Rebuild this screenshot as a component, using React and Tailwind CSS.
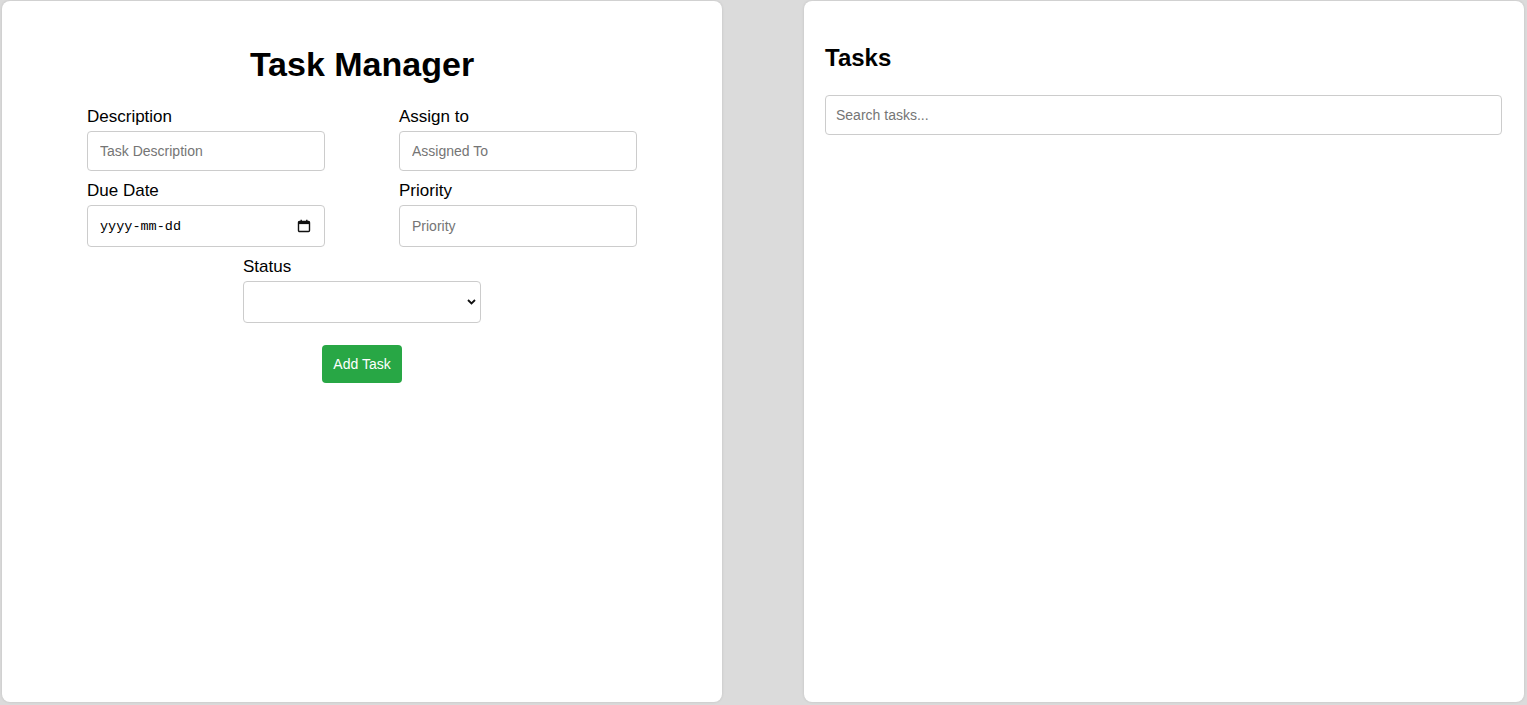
import React, { useState } from 'react';

const inputCls =
    'w-full border border-[#ccc] rounded-[4px] px-3 text-[14px] text-black bg-white outline-none placeholder:text-[#757575]';

const Field = ({ label, children }) => (
    <div className="flex flex-col mb-[10px]">
        <label className="text-[17px] leading-[20px] mb-[4px] text-black">{label}</label>
        {children}
    </div>
);

const CalendarIcon = () => (
    <svg width="14" height="14" viewBox="0 0 14 14" fill="none">
        <rect x="1.5" y="2.5" width="11" height="10" rx="1" stroke="#111" strokeWidth="1.4" />
        <rect x="1.5" y="2.5" width="11" height="2.6" fill="#111" />
        <line x1="4.2" y1="0.8" x2="4.2" y2="3" stroke="#111" strokeWidth="1.4" />
        <line x1="9.8" y1="0.8" x2="9.8" y2="3" stroke="#111" strokeWidth="1.4" />
    </svg>
);

const App = () => {
    const [description, setDescription] = useState('');
    const [assignedTo, setAssignedTo] = useState('');
    const [dueDate, setDueDate] = useState('');
    const [priority, setPriority] = useState('');
    const [status, setStatus] = useState('');
    const [search, setSearch] = useState('');

    return (
        <div
            className="h-[705px] bg-[#dbdbdb] flex pl-[2px] pr-[3px] pt-[1px] pb-[3px] gap-[82px]"
            style={{ fontFamily: '"Liberation Sans", Arial, sans-serif' }}
        >
            {/* left: form */}
            <div className="w-[720px] bg-white rounded-lg shadow-[0_0_3px_rgba(0,0,0,0.12)] pt-[44px]">
                <h1 className="text-[34px] leading-[39px] font-bold text-black text-center">Task Manager</h1>

                <div className="w-[550px] mx-auto mt-[23px]">
                    <div className="grid grid-cols-[238px_238px] gap-x-[74px]">
                        <Field label="Description">
                            <input
                                className={`${inputCls} h-10`}
                                placeholder="Task Description"
                                value={description}
                                onChange={(e) => setDescription(e.target.value)}
                            />
                        </Field>
                        <Field label="Assign to">
                            <input
                                className={`${inputCls} h-10`}
                                placeholder="Assigned To"
                                value={assignedTo}
                                onChange={(e) => setAssignedTo(e.target.value)}
                            />
                        </Field>
                        <Field label="Due Date">
                            <div className="relative">
                                <input
                                    className={`${inputCls} h-[42px] placeholder:text-black`}
                                    style={{ fontFamily: '"Liberation Mono", "DejaVu Sans Mono", monospace', fontSize: '13.5px' }}
                                    placeholder="yyyy-mm-dd"
                                    value={dueDate}
                                    onChange={(e) => setDueDate(e.target.value)}
                                />
                                <span className="absolute right-[14px] top-[14px] flex">
                                    <CalendarIcon />
                                </span>
                            </div>
                        </Field>
                        <Field label="Priority">
                            <input
                                className={`${inputCls} h-[42px]`}
                                placeholder="Priority"
                                value={priority}
                                onChange={(e) => setPriority(e.target.value)}
                            />
                        </Field>
                    </div>

                    <div className="w-[238px] mx-auto">
                        <Field label="Status">
                            <div className="relative">
                                <select
                                    className={`${inputCls} h-[42px] appearance-none`}
                                    value={status}
                                    onChange={(e) => setStatus(e.target.value)}
                                >
                                    <option value=""></option>
                                    <option value="todo">To Do</option>
                                    <option value="progress">In Progress</option>
                                    <option value="done">Done</option>
                                </select>
                                <svg className="absolute right-[5px] top-[18px] pointer-events-none" width="9" height="6" viewBox="0 0 9 6" fill="none">
                                    <path d="M1 1l3.5 3.5L8 1" stroke="#111" strokeWidth="1.8" />
                                </svg>
                            </div>
                        </Field>
                    </div>

                    <div className="flex justify-center mt-[22px]">
                        <button className="h-[38px] w-[80px] bg-[#28a745] text-white text-[14px] rounded-[4px]">
                            Add Task
                        </button>
                    </div>
                </div>
            </div>

            {/* right: task list */}
            <div className="w-[720px] bg-white rounded-lg shadow-[0_0_3px_rgba(0,0,0,0.12)] pt-[43px] pl-[21px] pr-[22px]">
                <h2 className="text-[24px] leading-[28px] font-bold text-black">Tasks</h2>
                <input
                    className={`${inputCls} h-10 mt-[23px] px-[10px]`}
                    placeholder="Search tasks..."
                    value={search}
                    onChange={(e) => setSearch(e.target.value)}
                />
            </div>
        </div>
    );
};

export default App;
